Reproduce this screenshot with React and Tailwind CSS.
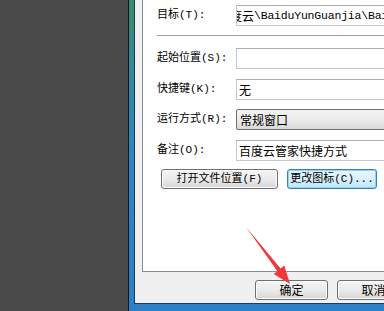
import React from 'react';

const Field = ({ label, children, className = '' }) => (
  <div className={`flex items-center h-[21px] ${className}`}>
    <div className="w-[79px] shrink-0 text-[11px] leading-none text-black whitespace-nowrap font-['Liberation_Mono','Noto_Sans_CJK_SC',monospace]">{label}</div>
    {children}
  </div>
);

const TextBox = ({ children }) => (
  <div className="h-[21px] w-[200px] shrink-0 flex items-center border border-[#c5c8ce] border-t-[#abadb3] bg-white pl-[2px] text-[12px] leading-none text-black whitespace-nowrap overflow-hidden">
    {children}
  </div>
);

const WinButton = ({ children, className = '', focused = false }) => (
  <div
    className={`h-[20px] shrink-0 flex items-center justify-center rounded-[3px] border text-black whitespace-nowrap leading-none ${
      focused
        ? 'border-[#3c7fb1] bg-linear-to-b from-[#eaf6fd] via-[#d9f0fc] to-[#bee6fd] shadow-[inset_0_0_0_1px_#8fd3f5]'
        : 'border-[#707070] bg-linear-to-b from-[#f4f4f4] via-[#ebebeb] to-[#d6d6d6] shadow-[inset_0_0_0_1px_#fcfcfc]'
    } ${className}`}
  >
    {children}
  </div>
);

export default function App() {
  return (
    <div className="relative w-[384px] h-[311px] overflow-hidden flex bg-[#4a4a4a] font-['Noto_Sans_CJK_SC',sans-serif]">
      <div className="w-[128px] shrink-0" />

      {/* window frame */}
      <div className="flex-1 flex flex-col border-l border-[#0b1620] bg-linear-to-b from-[#3e8a6c] via-[#2f86c2] to-[#2b80c7] pl-[5px] pb-[7px]">
        <div className="flex-1 flex flex-col border-l border-b border-[#1c3b58] bg-[#f0f0f0] pl-[7px]">
          {/* tab page */}
          <div className="h-[272px] shrink-0 border-l border-b border-[#898c95] bg-white pl-[14px] pt-[5px] overflow-hidden">
            <Field label="目标(T):">
              <TextBox>
                <span className="ml-[-9px] text-[12px]">度云</span>
                <span className="font-['Liberation_Mono',monospace] text-[11.5px] tracking-[-0.2px]">\BaiduYunGuanjia\BaiduYunGuanjia.exe</span>
              </TextBox>
            </Field>

            <div className="mt-[9px] h-px w-[260px] bg-[#a0a0a0]" />

            <Field label="起始位置(S):" className="mt-[12px]">
              <TextBox />
            </Field>

            <Field label="快捷键(K):" className="mt-[10px]">
              <TextBox>无</TextBox>
            </Field>

            <Field label="运行方式(R):" className="mt-[9px]">
              <div className="h-[21px] w-[200px] shrink-0 flex items-center rounded-[2px] border border-[#707070] bg-linear-to-b from-[#f3f3f3] via-[#ebebeb] to-[#d9d9d9] pl-[3px] text-[12px] leading-none text-black">
                常规窗口
              </div>
            </Field>

            <Field label="备注(O):" className="mt-[10px]">
              <TextBox>百度云管家快捷方式</TextBox>
            </Field>

            <div className="mt-[8px] ml-[4px] flex gap-[9px] text-[11px] font-['Liberation_Mono','Noto_Sans_CJK_SC',monospace]">
              <WinButton className="w-[117px]">打开文件位置(F)</WinButton>
              <WinButton focused className="w-[90px]">更改图标(C)...</WinButton>
            </div>
          </div>

          {/* dialog buttons */}
          <div className="flex-1 flex items-start pt-[8px] pl-[113px] gap-[9px] text-[12px]">
            <WinButton className="w-[73px]">确定</WinButton>
            <WinButton className="w-[73px]">取消</WinButton>
          </div>
        </div>
      </div>

      {/* red annotation arrow */}
      <svg className="absolute inset-0 pointer-events-none" width="384" height="311" viewBox="0 0 384 311">
        <polygon
          points="246,227 280.6,268.4 284.3,265.6 290,284 273.7,274 277.4,271.2"
          fill="#f0373a"
        />
      </svg>
    </div>
  );
}
